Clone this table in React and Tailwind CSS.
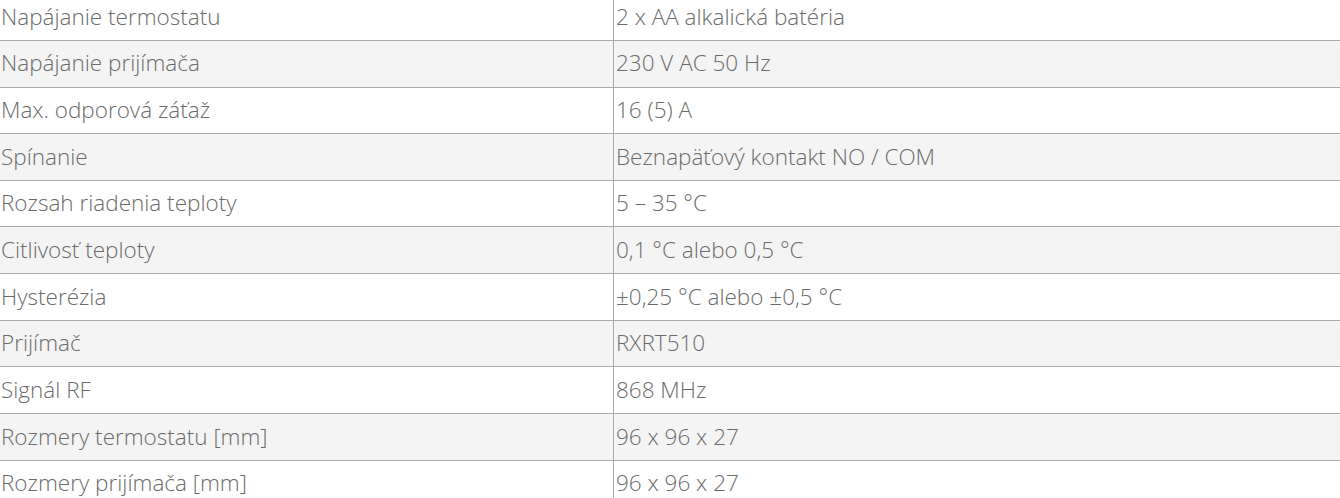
const specs = [
  ["Napájanie termostatu", "2 x AA alkalická batéria"],
  ["Napájanie prijímača", "230 V AC 50 Hz"],
  ["Max. odporová záťaž", "16 (5) A"],
  ["Spínanie", "Beznapäťový kontakt NO / COM"],
  ["Rozsah riadenia teploty", "5 – 35 °C"],
  ["Citlivosť teploty", "0,1 °C alebo 0,5 °C"],
  ["Hysterézia", "±0,25 °C alebo ±0,5 °C"],
  ["Prijímač", "RXRT510"],
  ["Signál RF", "868 MHz"],
  ["Rozmery termostatu [mm]", "96 x 96 x 27"],
  ["Rozmery prijímača [mm]", "96 x 96 x 27"],
];

export default function App() {
  return (
    <div className="h-[498px] w-full overflow-hidden bg-white font-['Open_Sans',sans-serif] text-[22.5px] font-light text-[#6b6b6b]">
      {/* table is scrolled a little, the first row is cut at the top */}
      <div className="-mt-[5.8px]">
        {specs.map(([label, value], index) => (
          <div
            key={label}
            className={`flex h-[46.67px] border-b border-[#ababab] ${
              index % 2 === 1 ? "bg-[#f4f4f4]" : "bg-white"
            }`}
          >
            <div className="w-[614px] shrink-0 border-r border-[#ababab] pl-[1px] pt-[7.5px] leading-[30px] whitespace-nowrap">
              {label}
            </div>
            <div className="flex-1 pl-[2px] pt-[7.5px] leading-[30px] whitespace-nowrap">
              {value}
            </div>
          </div>
        ))}
      </div>
    </div>
  );
}
